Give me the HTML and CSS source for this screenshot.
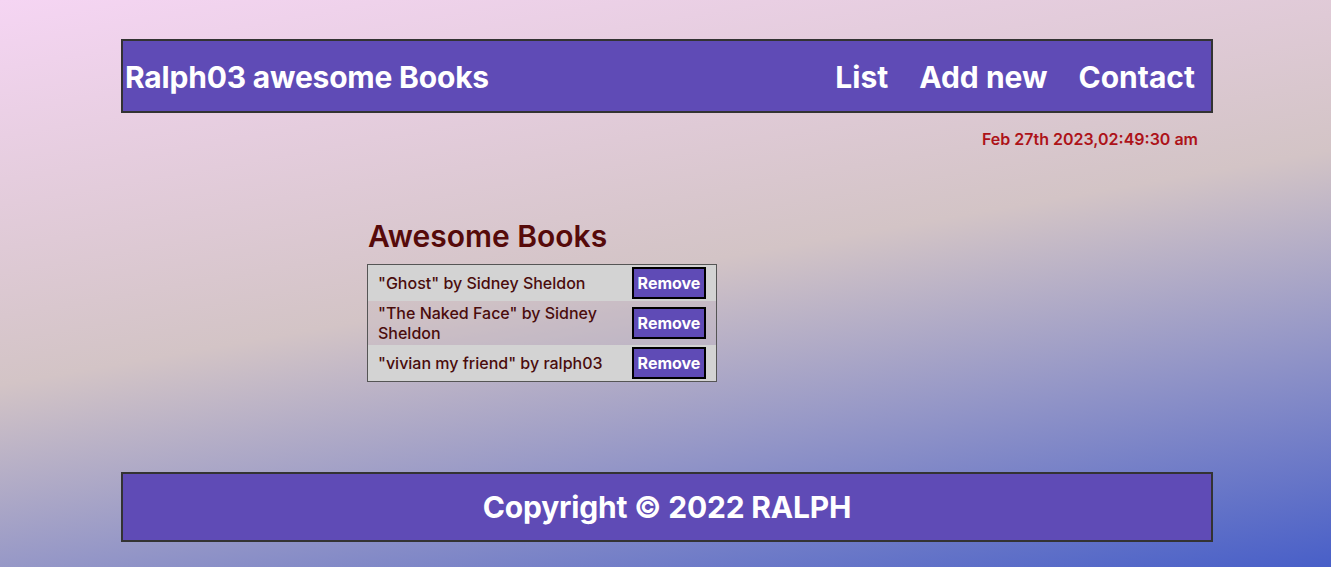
FILE: index.html
```html
<!DOCTYPE html>
<html lang="en">
<head>
<meta charset="utf-8">
<title>Awesome Books</title>
<link rel="stylesheet" href="styles.css">
</head>
<body>
<header class="topbar">
  <h1 class="brand">Ralph03 awesome Books</h1>
  <nav class="nav">
    <a class="nav-link" href="#">List</a>
    <a class="nav-link" href="#">Add new</a>
    <a class="nav-link" href="#">Contact</a>
  </nav>
</header>
<p class="date">Feb 27th 2023,02:49:30 am</p>
<main class="main">
  <h2 class="title">Awesome Books</h2>
  <ul class="books">
    <li class="book"><span class="book-text">"Ghost" by Sidney Sheldon</span><button class="remove">Remove</button></li>
    <li class="book"><span class="book-text">"The Naked Face" by Sidney Sheldon</span><button class="remove">Remove</button></li>
    <li class="book"><span class="book-text">"vivian my friend" by ralph03</span><button class="remove">Remove</button></li>
  </ul>
</main>
<footer class="footer">
  <p class="copy">Copyright © 2022 RALPH</p>
</footer>
</body>
</html>
```
FILE: styles.css
```css
html {
  height: 100%;
}
body {
  margin: 0;
  min-height: 100%;
  box-sizing: border-box;
  padding-top: 39px;
  font-family: Inter, "Noto Sans", sans-serif;
  background: linear-gradient(170deg, #f5d5f3 0%, #d3c4c6 48%, #485fc8 100%);
  background-attachment: fixed;
}
.topbar {
  width: 1092px;
  box-sizing: border-box;
  margin: 0 0 0 121px;
  border: 2px solid #333;
  background: #5f4bb6;
  display: flex;
  justify-content: space-between;
  align-items: center;
  padding: 18px 16px 16px 2px;
}
.brand {
  margin: 0;
  font-size: 30px;
  font-weight: 700;
  letter-spacing: -0.2px;
  color: #fff;
}
.nav {
  display: flex;
  gap: 31px;
}
.nav-link {
  color: #fff;
  text-decoration: none;
  font-size: 30px;
  font-weight: 700;
}
.date {
  width: 1092px;
  margin: 16px 0 0 121px;
  box-sizing: border-box;
  padding-right: 15px;
  text-align: right;
  font-size: 16px;
  font-weight: 600;
  color: #ad1218;
}
.main {
  margin: 69px 0 0 367px;
  width: 350px;
}
.title {
  margin: 0 0 10px 1px;
  font-size: 30px;
  font-weight: 600;
  color: #560a0a;
}
.books {
  list-style: none;
  margin: 0;
  padding: 0;
  border: 1px solid #555;
}
.book {
  display: flex;
  align-items: center;
  gap: 10px;
  padding: 2px 10px;
  background: #d3d3d3;
  font-size: 16px;
  font-weight: 500;
  line-height: 20px;
  color: #4a0c0c;
}
.book:nth-child(even) {
  background: rgba(200, 190, 196, 0.35);
}
.book-text {
  flex: 1;
}
.remove {
  width: 74px;
  height: 32px;
  box-sizing: border-box;
  border: 2px solid #000;
  background: #5f4bb6;
  color: #fff;
  font-family: Inter, "Noto Sans", sans-serif;
  font-size: 16px;
  font-weight: 700;
  padding: 0;
}
.footer {
  width: 1092px;
  box-sizing: border-box;
  margin: 90px 0 0 121px;
  border: 2px solid #333;
  background: #5f4bb6;
  padding: 15px 0;
}
.copy {
  margin: 0;
  text-align: center;
  font-size: 30px;
  font-weight: 700;
  letter-spacing: -0.2px;
  color: #fff;
}
```
